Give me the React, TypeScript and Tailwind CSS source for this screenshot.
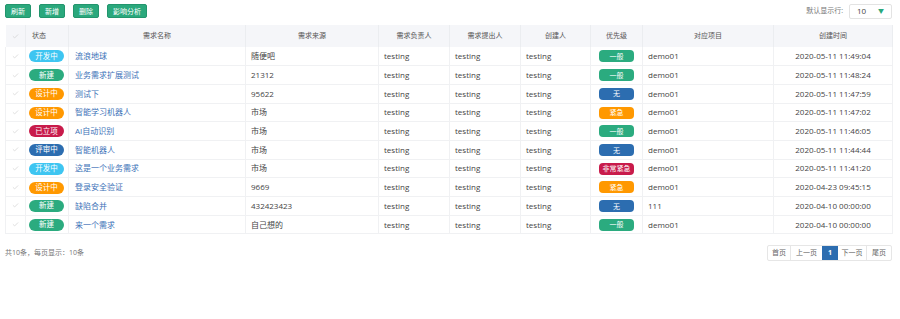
import { Check } from 'lucide-react';

type Row = {
  status: string;
  name: string;
  source: string;
  priority: string;
  project: string;
  time: string;
};

const rows: Row[] = [
  { status: '开发中', name: '流浪地球', source: '随便吧', priority: '一般', project: 'demo01', time: '2020-05-11 11:49:04' },
  { status: '新建', name: '业务需求扩展测试', source: '21312', priority: '一般', project: 'demo01', time: '2020-05-11 11:48:24' },
  { status: '设计中', name: '测试下', source: '95622', priority: '无', project: 'demo01', time: '2020-05-11 11:47:59' },
  { status: '设计中', name: '智能学习机器人', source: '市场', priority: '紧急', project: 'demo01', time: '2020-05-11 11:47:02' },
  { status: '已立项', name: 'AI自动识别', source: '市场', priority: '一般', project: 'demo01', time: '2020-05-11 11:46:05' },
  { status: '评审中', name: '智能机器人', source: '市场', priority: '无', project: 'demo01', time: '2020-05-11 11:44:44' },
  { status: '开发中', name: '这是一个业务需求', source: '市场', priority: '非常紧急', project: 'demo01', time: '2020-05-11 11:41:20' },
  { status: '设计中', name: '登录安全验证', source: '9669', priority: '紧急', project: 'demo01', time: '2020-04-23 09:45:15' },
  { status: '新建', name: '缺陷合并', source: '432423423', priority: '无', project: '111', time: '2020-04-10 00:00:00' },
  { status: '新建', name: '来一个需求', source: '自己想的', priority: '一般', project: 'demo01', time: '2020-04-10 00:00:00' },
];

// badge colours
const statusColor: Record<string, string> = {
  开发中: 'bg-[#3ec5f1]',
  新建: 'bg-[#2bab7f]',
  设计中: 'bg-[#ff9800]',
  已立项: 'bg-[#c81b4b]',
  评审中: 'bg-[#2c6db0]',
};

const priorityColor: Record<string, string> = {
  一般: 'bg-[#2bab7f]',
  无: 'bg-[#2c6db0]',
  紧急: 'bg-[#ff9800]',
  非常紧急: 'bg-[#c81b4b]',
};

const headers = ['状态', '需求名称', '需求来源', '需求负责人', '需求提出人', '创建人', '优先级', '对应项目', '创建时间'];

const App = () => {
  return (
    <div className="w-[900px] h-[319px] bg-white px-[5px] pt-[4px] text-[#555] font-['Open_Sans','Noto_Sans_CJK_SC',sans-serif]">
      {/* toolbar */}
      <div className="flex items-center h-[14px]">
        <div className="flex gap-[8px]">
          {['刷新', '新增', '删除', '影响分析'].map((b) => (
            <button
              key={b}
              className="h-[14px] px-[5px] min-w-[25px] rounded-[2px] bg-[#2aa87c] border border-[#23956d] text-white text-[7px] leading-none"
            >
              {b}
            </button>
          ))}
        </div>
        <div className="ml-auto flex items-center gap-[6px] mr-[3px]">
          <span className="text-[7px] text-[#777]">默认显示行:</span>
          <div className="w-[43px] h-[15px] border border-[#e3e3e3] rounded-[2px] flex items-center justify-between px-[7px] text-[8px] text-[#444]">
            <span>10</span>
            <span className="text-[#2aa87c] text-[6px]">▼</span>
          </div>
        </div>
      </div>

      {/* table */}
      <table className="mt-[7px] w-[887px] table-fixed border-collapse text-[8px]">
        <colgroup>
          <col className="w-[20px]" />
          <col className="w-[43px]" />
          <col className="w-[177px]" />
          <col className="w-[133px]" />
          <col className="w-[71px]" />
          <col className="w-[71px]" />
          <col className="w-[70px]" />
          <col className="w-[52px]" />
          <col className="w-[131px]" />
          <col className="w-[119px]" />
        </colgroup>
        <thead>
          <tr className="h-[22px] bg-[#f5f6f9]">
            <th className="border-r border-[#ebedf0] font-normal">
              <Check className="w-[7px] h-[7px] mx-auto text-[#c8c8c8]" strokeWidth={2} />
            </th>
            {headers.map((h, i) => (
              <th
                key={h}
                className={`border-r border-[#ebedf0] font-normal text-[7px] text-[#555] ${i === 0 ? 'text-left pl-[6px]' : 'text-center'}`}
              >
                {h}
              </th>
            ))}
          </tr>
        </thead>
        <tbody>
          {rows.map((r, i) => (
            <tr key={i} className="h-[18.7px] border-b border-[#f0f1f3]">
              <td className="border-r border-l border-[#f0f1f3]">
                <Check className="w-[7px] h-[7px] mx-auto text-[#c8c8c8]" strokeWidth={2} />
              </td>
              <td className="border-r border-[#f0f1f3] pl-[3px]">
                <span
                  className={`${statusColor[r.status]} inline-flex items-center justify-center w-[35px] h-[12px] rounded-full text-white text-[7.5px] leading-none`}
                >
                  {r.status}
                </span>
              </td>
              <td className="border-r border-[#f0f1f3] pl-[6px] text-[#3d72b8]">{r.name}</td>
              <td className="border-r border-[#f0f1f3] pl-[5px] text-[#444]">{r.source}</td>
              <td className="border-r border-[#f0f1f3] pl-[5px] text-[#444]">testing</td>
              <td className="border-r border-[#f0f1f3] pl-[5px] text-[#444]">testing</td>
              <td className="border-r border-[#f0f1f3] pl-[5px] text-[#444]">testing</td>
              <td className="border-r border-[#f0f1f3] pl-[8px]">
                <span
                  className={`${priorityColor[r.priority]} inline-flex items-center justify-center w-[35px] h-[12px] rounded-[4px] text-white text-[7px] leading-none whitespace-nowrap`}
                >
                  {r.priority}
                </span>
              </td>
              <td className="border-r border-[#f0f1f3] pl-[5px] text-[#444]">{r.project}</td>
              <td className="border-r border-[#f0f1f3] text-center text-[#444]">{r.time}</td>
            </tr>
          ))}
        </tbody>
      </table>

      {/* footer */}
      <div className="mt-[11px] flex items-center w-[887px]">
        <span className="text-[7px] text-[#777]">共10条，每页显示：10条</span>
        <div className="ml-auto flex h-[16px] border border-[#e6e6e6] rounded-[2px] text-[7px] text-[#666]">
          <span className="w-[22px] flex items-center justify-center">首页</span>
          <span className="w-[32px] flex items-center justify-center border-l border-[#e6e6e6]">上一页</span>
          <span className="w-[16px] flex items-center justify-center bg-[#2c6db0] text-white font-bold">1</span>
          <span className="w-[29px] flex items-center justify-center border-r border-[#e6e6e6]">下一页</span>
          <span className="w-[24px] flex items-center justify-center">尾页</span>
        </div>
      </div>
    </div>
  );
};

export default App;
